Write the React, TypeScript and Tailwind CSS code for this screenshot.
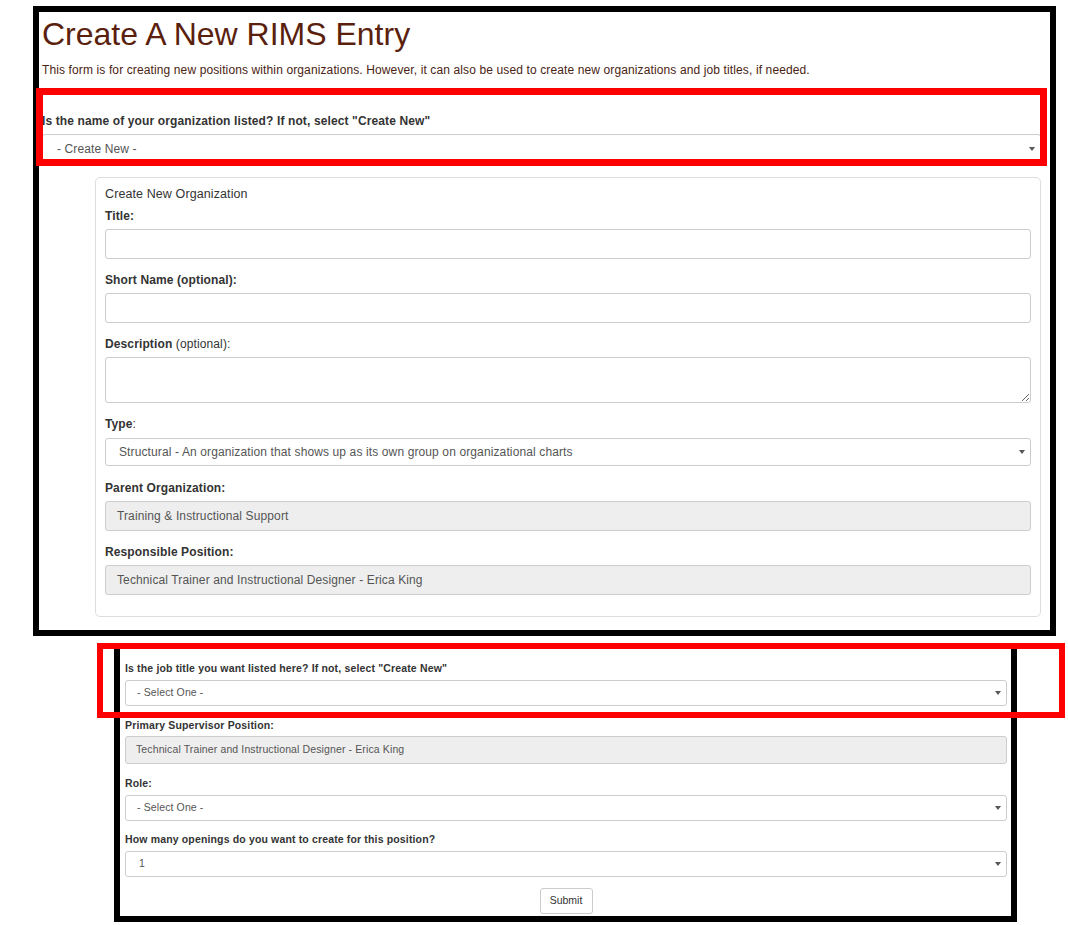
import React from "react";

const caret = (
  <svg width="6" height="5" viewBox="0 0 6 5" className="pointer-events-none absolute right-[6px] top-1/2 -translate-y-1/2">
    <path d="M0 0.5h6L3 4.5z" fill="#555" />
  </svg>
);

function Select({ value, h, pl, text }: { value: string; h: string; pl: string; text: string }) {
  return (
    <div className="relative">
      <select
        defaultValue={value}
        className={`block w-full appearance-none rounded-[3px] border border-[#ccc] bg-white tracking-[0.12px] ${h} ${pl} ${text} text-[#555] outline-none`}
      >
        <option value={value}>{value}</option>
      </select>
      {caret}
    </div>
  );
}

function Disabled({ value, h, pl, text }: { value: string; h: string; pl: string; text: string }) {
  return (
    <div
      className={`flex w-full items-center rounded-[3px] border border-[#ccc] bg-[#eee] tracking-[0.12px] ${h} ${pl} ${text} text-[#555]`}
    >
      {value}
    </div>
  );
}

function Label({ children, className = "" }: { children: React.ReactNode; className?: string }) {
  return (
    <div className={`text-[12px] leading-[17px] font-bold tracking-[0.12px] text-[#333] ${className}`}>{children}</div>
  );
}

function SmallLabel({ children, className = "" }: { children: React.ReactNode; className?: string }) {
  return (
    <div className={`text-[10.5px] leading-[15px] font-bold tracking-[0.15px] text-[#333] ${className}`}>
      {children}
    </div>
  );
}

export default function App() {
  return (
    <div
      className="relative h-[925px] w-[1068px] overflow-hidden bg-white"
      style={{ fontFamily: '"Liberation Sans", Arial, sans-serif' }}
    >
      {/* Top form */}
      <div className="ml-[33px] mt-[6px] box-border h-[630px] w-[1023px] border-[6px] border-black pl-[3px] pr-[9px] pt-[5px]">
        <h1 className="text-[32px] leading-[35px] text-[#5b1f0e]">Create A New RIMS Entry</h1>
        <p className="mt-[10px] text-[12px] leading-[17px] tracking-[0.12px] text-[#4a2313]">
          This form is for creating new positions within organizations. However, it can also be used to create new
          organizations and job titles, if needed.
        </p>

        <Label className="mt-[34px] mb-[4px]">Is the name of your organization listed? If not, select "Create New"</Label>
        <Select value="- Create New -" h="h-[30px]" pl="pl-[14px]" text="text-[12px]" />

        <div className="ml-[53px] mt-[13px] box-border h-[440px] rounded-[5px] border border-[#ddd] px-[9px] pt-[8px]">
          <div className="text-[12.5px] leading-[17px] tracking-[0.1px] text-[#333]">Create New Organization</div>

          <Label className="mt-[5px] mb-[4px]">Title:</Label>
          <input className="box-border block h-[30px] w-full rounded-[3px] border border-[#ccc] bg-white outline-none" />

          <Label className="mt-[13px] mb-[4px]">Short Name (optional):</Label>
          <input className="box-border block h-[30px] w-full rounded-[3px] border border-[#ccc] bg-white outline-none" />

          <Label className="mt-[13px] mb-[4px]">
            Description <span className="font-normal">(optional):</span>
          </Label>
          <textarea className="box-border block h-[46px] w-full resize-y rounded-[3px] border border-[#ccc] bg-white outline-none" />

          <Label className="mt-[13px] mb-[5px]">
            Type<span className="font-normal">:</span>
          </Label>
          <Select
            value="Structural - An organization that shows up as its own group on organizational charts"
            h="h-[28px]"
            pl="pl-[13px]"
            text="text-[12px]"
          />

          <Label className="mt-[14px] mb-[4px]">Parent Organization:</Label>
          <Disabled value="Training & Instructional Support" h="h-[30px]" pl="pl-[11px]" text="text-[12px]" />

          <Label className="mt-[13px] mb-[4px]">Responsible Position:</Label>
          <Disabled
            value="Technical Trainer and Instructional Designer - Erica King"
            h="h-[30px]"
            pl="pl-[11px]"
            text="text-[12px]"
          />
        </div>
      </div>

      {/* Bottom form */}
      <div className="ml-[114px] mt-[7px] box-border flex h-[279px] w-[903px] flex-col border-[6px] border-black pl-[5px] pr-[4px] pt-[12px]">
        <SmallLabel className="mb-[4px]">Is the job title you want listed here? If not, select "Create New"</SmallLabel>
        <Select value="- Select One -" h="h-[26px]" pl="pl-[11px]" text="text-[10.5px]" />

        <SmallLabel className="mt-[12px] mb-[3px]">Primary Supervisor Position:</SmallLabel>
        <Disabled
          value="Technical Trainer and Instructional Designer - Erica King"
          h="h-[28px]"
          pl="pl-[10px]"
          text="text-[10.5px]"
        />

        <SmallLabel className="mt-[12px] mb-[4px]">Role:</SmallLabel>
        <Select value="- Select One -" h="h-[26px]" pl="pl-[11px]" text="text-[10.5px]" />

        <SmallLabel className="mt-[11px] mb-[4px]">How many openings do you want to create for this position?</SmallLabel>
        <Select value="1" h="h-[26px]" pl="pl-[13px]" text="text-[10.5px]" />

        <button className="mx-auto mt-[11px] h-[26px] w-[53px] rounded-[3px] border border-[#ccc] bg-white text-[10.5px] text-[#333]">
          Submit
        </button>
      </div>

      {/* Highlight annotations */}
      <div className="pointer-events-none absolute left-[36px] top-[88px] box-border h-[78px] w-[1011px] border-[7px] border-[#ff0000]" />
      <div className="pointer-events-none absolute left-[97px] top-[643px] box-border h-[75px] w-[968px] border-[6px] border-[#ff0000]" />
    </div>
  );
}
